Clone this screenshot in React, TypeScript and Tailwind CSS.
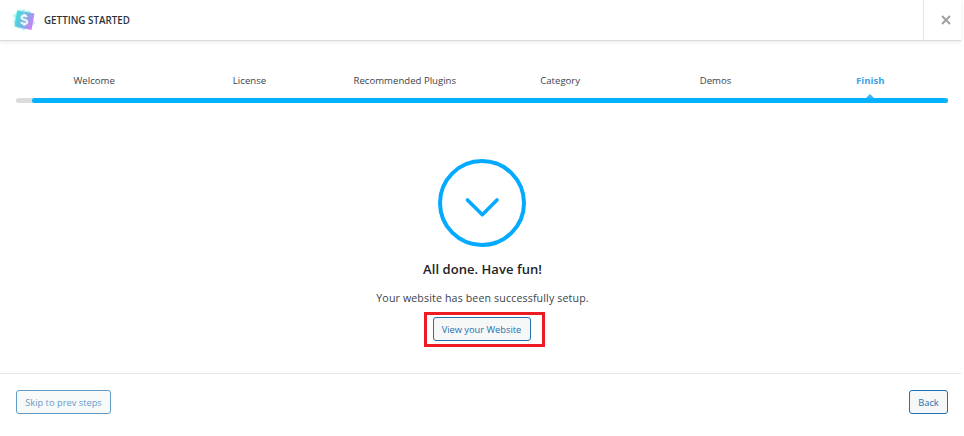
const steps = ["Welcome", "License", "Recommended Plugins", "Category", "Demos"];

function Logo() {
  return (
    <svg width="24" height="24" viewBox="0 0 24 24" className="ml-3 shrink-0">
      <defs>
        <linearGradient id="tile" x1="0" y1="0.3" x2="1" y2="0.7">
          <stop offset="0" stopColor="#35e3da" />
          <stop offset="0.5" stopColor="#6aaee2" />
          <stop offset="1" stopColor="#f062ff" />
        </linearGradient>
      </defs>
      <path d="M7 1L9 2.5L12 1L14 3L18 2.5L19 5L22 7L21 11L23 15L20 18L18 21L15 20L12 22.5L9 20.5L5 20L4 17L1 14L3 11L1 7L5 5Z" fill="#83eee6" opacity="0.65" />
      <path d="M5 2.5L22.5 5.5L19.5 22L2.5 18.5Z" fill="url(#tile)" opacity="0.9" />
      <path d="M14.8 9.2C14.5 8 13.6 7.6 12.2 7.6C10.8 7.6 9.6 8.2 9.6 9.5C9.6 12.4 15.2 11 15.2 13.9C15.2 15.2 14 15.8 12.3 15.8C10.8 15.8 9.7 15.2 9.4 14M12.3 5.8V8M12.3 16V17.8" fill="none" stroke="#f1f3fb" strokeWidth="2.2" />
    </svg>
  );
}

export default function App() {
  return (
    <div className="flex h-[436px] w-[961px] flex-col bg-white font-['Open_Sans','Noto_Sans',sans-serif] text-[#3c434a]">
      <header className="flex h-[41px] shrink-0 items-center border-b border-[#dcdcde] shadow-[0_1px_4px_rgba(0,0,0,0.09)]">
        <Logo />
        <h1 className="ml-2 pt-px text-[9.8px] leading-none font-semibold tracking-[0.01px] whitespace-nowrap text-[#2c3338]">GETTING STARTED</h1>
        <button aria-label="Close" className="ml-auto flex h-10 w-[38px] items-center justify-center border-l border-[#e5e5e5] pl-[6px]">
          <svg width="10" height="10" viewBox="0 0 10 10" stroke="#a0a0a0" strokeWidth="2">
            <path d="M1 1L9 9M9 1L1 9" />
          </svg>
        </button>
      </header>

      <main className="flex h-[332px] shrink-0 flex-col items-center pt-[31px]">
        <nav className="ml-4 grid w-[932px] grid-cols-6 self-start text-center text-[9.6px] leading-[18px]">
          {steps.map((s) => (
            <span key={s} className="pl-px">{s}</span>
          ))}
          <span className="font-bold text-[#3aa3ec]">Finish</span>
        </nav>
        <div className="mt-1 ml-4 grid h-1 w-[932px] grid-cols-6 self-start">
          <svg width="10" height="4" viewBox="0 0 10 4" className="col-start-6 justify-self-center">
            <path d="M1 4L5 0L9 4Z" fill="#3db2fa" />
          </svg>
        </div>
        <div className="ml-4 h-[5px] w-[932px] self-start rounded-full bg-[#dcdcdc] pl-4">
          <div className="h-full rounded-full bg-[#03b1ff]" />
        </div>
        <svg width="88" height="88" viewBox="0 0 88 88" fill="none" stroke="#03aaff" className="mt-14 ml-[3px] shrink-0">
          <circle cx="44" cy="44" r="42" strokeWidth="4" />
          <path d="M29.5 41L44.3 55.7L59 41" strokeWidth="3.6" strokeLinecap="round" strokeLinejoin="round" />
        </svg>
        <h2 className="mt-[13px] ml-1 text-[13px] leading-[18px] font-semibold tracking-[0.05px] whitespace-nowrap text-[#1d2327]">All done. Have fun!</h2>
        <p className="mt-3 ml-1 text-[10.6px] leading-[16px] tracking-[0.15px] whitespace-nowrap">Your website has been successfully setup.</p>
        <div className="mt-[6px] ml-[7px] flex h-[35px] w-[121px] shrink-0 items-start border-[3px] border-[#ed1c24] pt-[2px] pl-[6px]">
          <button className="h-6 w-[98px] rounded-[3px] border border-[#2271b1] bg-[#f6f7f7] pt-[2px] text-[9.3px] leading-none whitespace-nowrap text-[#2271b1]">View your Website</button>
        </div>
      </main>

      <footer className="flex flex-1 items-start justify-between border-t border-[#e8e8e8] pt-4 pr-[13px] pl-4 text-[9.3px] leading-none text-[#2271b1]">
        <button className="h-6 w-[95px] rounded-[3px] border border-[#2271b1] bg-[#f6f7f7] pt-[2px] whitespace-nowrap opacity-70">Skip to prev steps</button>
        <button className="h-6 w-[39px] rounded-[3px] border border-[#2271b1] bg-[#f6f7f7] pt-[2px]">Back</button>
      </footer>
    </div>
  );
}
